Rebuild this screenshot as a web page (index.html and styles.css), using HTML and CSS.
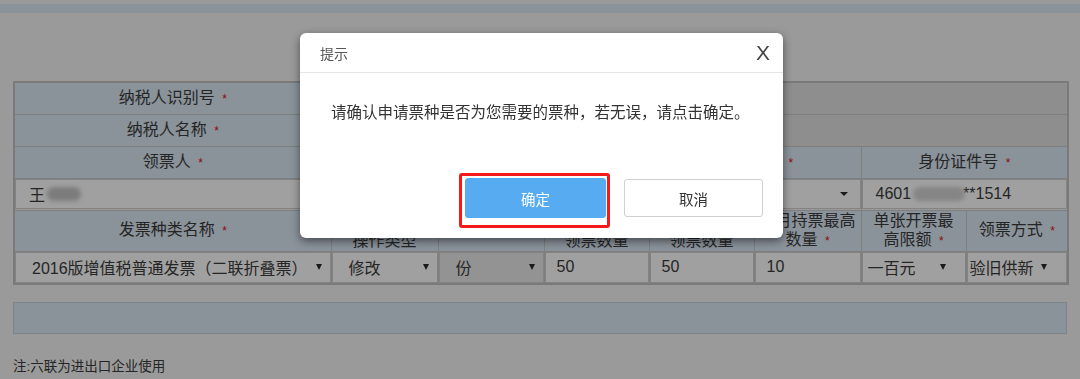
FILE: index.html
```html
<html>
  <head>
    <meta charset="utf-8" />
    <title>发票领用</title>
    <link rel="stylesheet" href="styles.css">
  </head>
  <body>
    <div class="topbar"></div>

    <main>
      <table class="form">
        <colgroup>
          <col style="width: 317px">
          <col style="width: 107px">
          <col style="width: 106px">
          <col style="width: 105px">
          <col style="width: 105px">
          <col style="width: 107px">
          <col style="width: 105px">
          <col style="width: 102px">
        </colgroup>
        <tr class="row">
          <th>纳税人识别号 <span class="req">*</span></th>
          <td colspan="7" class="readonly"></td>
        </tr>
        <tr class="row">
          <th>纳税人名称 <span class="req">*</span></th>
          <td colspan="7" class="readonly"></td>
        </tr>
        <tr class="row">
          <th>领票人 <span class="req">*</span></th>
          <th colspan="3">联系电话 <span class="req">*</span></th>
          <th colspan="2">证件类型 <span class="req">*</span></th>
          <th colspan="2">身份证件号 <span class="req">*</span></th>
        </tr>
        <tr class="row">
          <td><div class="field pad-name">王<span class="blur short"></span></div></td>
          <td colspan="3"><div class="field"></div></td>
          <td colspan="2"><div class="field select wide"><span></span><i class="caret big"></i></div></td>
          <td colspan="2"><div class="field pad-id">4601<span class="blur"></span>**1514</div></td>
        </tr>
        <tr class="row tall">
          <th>发票种类名称 <span class="req">*</span></th>
          <th>票种<br>操作类型</th>
          <th>单位</th>
          <th>每次最高<br>领票数量</th>
          <th>每月最高<br>领票数量</th>
          <th>每月持票最高<br>数量 <span class="req">*</span></th>
          <th>单张开票最<br>高限额 <span class="req">*</span></th>
          <th>领票方式 <span class="req">*</span></th>
        </tr>
        <tr class="row inputs">
          <td><div class="field select pad-wide"><span>2016版增值税普通发票（二联折叠票）</span><i class="caret"></i></div></td>
          <td><div class="field select pad-wide"><span>修改</span><i class="caret"></i></div></td>
          <td><div class="field select pad-wide disabled"><span>份</span><i class="caret"></i></div></td>
          <td><div class="field">50</div></td>
          <td><div class="field">50</div></td>
          <td><div class="field">10</div></td>
          <td><div class="field select narrow"><span>一百元</span><i class="caret"></i></div></td>
          <td><div class="field select narrow tight"><span>验旧供新</span><i class="caret"></i></div></td>
        </tr>
      </table>

      <div class="bar"></div>

      <p class="note">注:六联为进出口企业使用</p>
    </main>

    <!-- page is shown dimmed behind the modal -->
    <div class="dialog">
      <div class="dialog-head">
        <span>提示</span>
        <span class="close">X</span>
      </div>
      <div class="dialog-body">请确认申请票种是否为您需要的票种，若无误，请点击确定。</div>
      <div class="dialog-foot">
        <button class="btn ok">确定</button>
        <button class="btn cancel">取消</button>
      </div>
      <div class="mark"></div>
    </div>
  </body>
</html>
```

FILE: styles.css
```css
html, body {
  margin: 0;
}

/* colours below are the page as seen through the modal's dark mask */
body {
  background-color: #9a9a9a;
  font-family: "Liberation Sans", "Noto Sans CJK SC", sans-serif;
  font-size: 13.5px;
  color: #252525;
}

.topbar {
  margin-top: 4px;
  height: 9px;
  background-color: #8a929a;
}

main {
  padding: 68px 13px 0;
}

.form {
  width: 1054px;
  table-layout: fixed;
  border-collapse: collapse;
  border: 2px solid #7a7a7a;
}

.form th, .form td {
  border: 1px solid #7e7e7e;
  padding: 0;
  box-sizing: border-box;
}

.form th {
  background-color: #8a929a;
  font-weight: normal;
  text-align: center;
  line-height: 19px;
}

.row {
  height: 32px;
}
.row.tall {
  height: 40px;
}
.row.inputs {
  height: 33px;
}

.req {
  color: #8c0a0a;
  margin-left: 3px;
  font-size: 12px;
}

.readonly {
  background-color: #8e8e8e;
}

.field {
  height: 30px;
  display: flex;
  align-items: center;
  background-color: #a0a0a0;
  border: 1px solid #838383;
  padding-left: 11px;
  box-sizing: border-box;
}
.row.inputs .field {
  height: 31px;
}

.pad-name, .pad-id {
  padding-left: 13px;
}
.pad-wide {
  padding-left: 16px;
}

.select {
  padding-right: 8px;
}
.select span {
  flex: 1 1 0;
  white-space: nowrap;
}
.select.disabled {
  background-color: #939393;
}
.select.wide {
  padding-right: 12px;
}
.select.narrow {
  padding-left: 5px;
  padding-right: 19px;
}
.select.tight {
  padding-left: 2px;
}

.caret {
  width: 0;
  height: 0;
  border-left: 3px solid transparent;
  border-right: 3px solid transparent;
  border-top: 6px solid #1a1a1a;
}
.caret.big {
  border-left-width: 4px;
  border-right-width: 4px;
  border-top-width: 4px;
}

.blur {
  display: inline-block;
  width: 52px;
  height: 14px;
  margin: 0 -2px 0 2px;
  border-radius: 7px;
  background-color: #858585;
  filter: blur(2px);
}
.blur.short {
  width: 34px;
  background-color: #7c7c7c;
}

.bar {
  margin-top: 17px;
  height: 32px;
  background-color: #8a929a;
  border: 1px solid #7e8388;
  box-sizing: border-box;
}

.note {
  margin: 21px 0 0;
  font-size: 13.5px;
}

.dialog {
  position: fixed;
  left: 300px;
  top: 33px;
  width: 483px;
  height: 205px;
  background-color: #fff;
  border-radius: 6px;
  box-shadow: 0 3px 9px rgba(0, 0, 0, 0.5);
  display: flex;
  flex-direction: column;
}

.dialog-head {
  height: 39px;
  display: flex;
  align-items: center;
  justify-content: space-between;
  padding: 0 13px 0 20px;
  border-bottom: 1px solid #e5e5e5;
  color: #555;
  font-size: 14px;
}
.close {
  font-size: 21px;
  color: #444;
}

.dialog-body {
  padding: 30px 0 0 31px;
  height: 76px;
  font-size: 15.5px;
  line-height: 20px;
  color: #333;
  box-sizing: border-box;
}

.dialog-foot {
  display: flex;
  justify-content: flex-end;
  align-items: flex-start;
  gap: 18px;
  padding: 30px 20px 0 0;
}

.btn {
  font-family: inherit;
  font-size: 14.5px;
  border-radius: 3px;
  cursor: pointer;
}
.btn.ok {
  width: 141px;
  height: 40px;
  margin-top: -1px;
  background-color: #56abf1;
  border: 1px solid #56abf1;
  color: #fff;
}
.btn.cancel {
  width: 139px;
  height: 38px;
  background-color: #fff;
  border: 1px solid #d0d0d0;
  color: #333;
}

.mark {
  position: absolute;
  left: 159px;
  top: 140px;
  width: 151px;
  height: 55px;
  border: 3px solid #f41a1a;
  border-radius: 3px;
  box-sizing: border-box;
}
```
